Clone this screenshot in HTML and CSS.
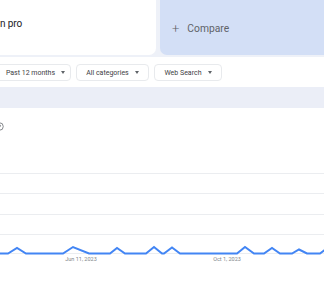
FILE: index.html
```html
<!DOCTYPE html>
<html lang="en">
<head>
    <meta charset="UTF-8">
    <meta name="viewport" content="width=device-width, initial-scale=1.0">
    <title>Explore | Trends</title>
    <link rel="stylesheet" href="styles.css">
</head>
<body>
    <div class="page">
        <div class="terms">
            <div class="term-card">
                <span class="term-name">n pro</span>
            </div>
            <div class="compare-card">
                <span class="plus">+</span>
                <span class="compare-label">Compare</span>
            </div>
        </div>

        <div class="filters">
            <button class="filter first">Past 12 months <span class="caret"></span></button>
            <button class="filter">All categories <span class="caret"></span></button>
            <button class="filter">Web Search <span class="caret"></span></button>
        </div>

        <div class="band"></div>

        <div class="chart-card">
            <div class="chart-head">
                <svg class="help" width="9" height="9" viewBox="0 0 24 24">
                    <circle cx="12" cy="12" r="10" fill="none" stroke="#5f6368" stroke-width="2"/>
                    <path d="M9.2 9.3a2.9 2.9 0 0 1 5.6 1c0 2-2.8 2.3-2.8 4" fill="none" stroke="#5f6368" stroke-width="2"/>
                    <circle cx="12" cy="17.5" r="1.2" fill="#5f6368"/>
                </svg>
            </div>
            <svg class="chart" width="324" height="145" viewBox="0 0 324 145">
                <g stroke="#ebedf0" stroke-width="1">
                    <line x1="0" y1="25.5" x2="324" y2="25.5"/>
                    <line x1="0" y1="45.5" x2="324" y2="45.5"/>
                    <line x1="0" y1="66.5" x2="324" y2="66.5"/>
                    <line x1="0" y1="86.5" x2="324" y2="86.5"/>
                    <line x1="0" y1="105.5" x2="324" y2="105.5"/>
                </g>
                <polyline fill="none" stroke="#4285f4" stroke-width="2" stroke-linejoin="miter"
                    points="0,105.5 8,105.5 17,100 26,105.5 63,105.5 73,99 89,105.5 110,105.5 117,100 125,105.5 146,105.5 154,99 162,105.5 164,105.5 172,99.5 180,105.5 237,105.5 245,99 254,105.5 264,105.5 272,100 280,105.5 292,105.5 299,101.5 307,105.5 320,105.5 326,101"/>
                <text x="81" y="112.5" class="axis-label" text-anchor="middle">Jun 11, 2023</text>
                <text x="227" y="112.5" class="axis-label" text-anchor="middle">Oct 1, 2023</text>
            </svg>
        </div>
    </div>
</body>
</html>
```
FILE: styles.css
```css
body {
    margin: 0;
    padding: 0;
    background: #eef1f8;
    font-family: Roboto, "Liberation Sans", Arial, sans-serif;
    color: #202124;
    overflow: hidden;
}

.page {
    width: 324px;
    height: 293px;
    overflow: hidden;
}

.terms {
    display: flex;
    gap: 4px;
    height: 55px;
}

.term-card {
    width: 156px;
    background: #fff;
    border-radius: 0 0 7px 0;
    display: flex;
    align-items: center;
    padding-bottom: 8px;
    box-sizing: border-box;
}

.term-name {
    font-size: 10px;
    letter-spacing: -0.1px;
}

.compare-card {
    flex: 1;
    background: #d3dff6;
    border-radius: 0 0 0 7px;
    display: flex;
    align-items: center;
    padding-left: 12px;
    padding-top: 1px;
    color: #5f6368;
}

.plus {
    font-size: 13px;
    font-weight: 300;
    margin-right: 8px;
}

.compare-label {
    font-size: 10.3px;
}

.filters {
    margin-top: 2px;
    height: 30px;
    background: #fff;
    display: flex;
    align-items: center;
    gap: 5px;
    padding-top: 1px;
    box-sizing: border-box;
}

.filter {
    height: 17px;
    border: 1px solid #e8eaed;
    border-radius: 4px;
    background: #fff;
    font-family: inherit;
    font-size: 7px;
    color: #3c4043;
    padding: 0;
    display: flex;
    align-items: center;
    justify-content: center;
}

.filter.first {
    width: 83px;
    margin-left: -12px;
    padding-left: 12px;
}

.filter:nth-child(2) {
    width: 73px;
}

.filter:nth-child(3) {
    width: 68px;
}

.caret {
    display: inline-block;
    width: 0;
    height: 0;
    margin-left: 6px;
    border-left: 2.5px solid transparent;
    border-right: 2.5px solid transparent;
    border-top: 3px solid #5f6368;
}

.band {
    height: 21px;
    background: #ebeef7;
}

.chart-card {
    background: #fff;
    height: 185px;
}

.chart-head {
    height: 40px;
}

.help {
    display: block;
    margin-left: -5px;
    padding-top: 14px;
}

.chart {
    display: block;
}

.axis-label {
    font-size: 5.5px;
    fill: #80868b;
    font-family: Roboto, "Liberation Sans", Arial, sans-serif;
}
```
